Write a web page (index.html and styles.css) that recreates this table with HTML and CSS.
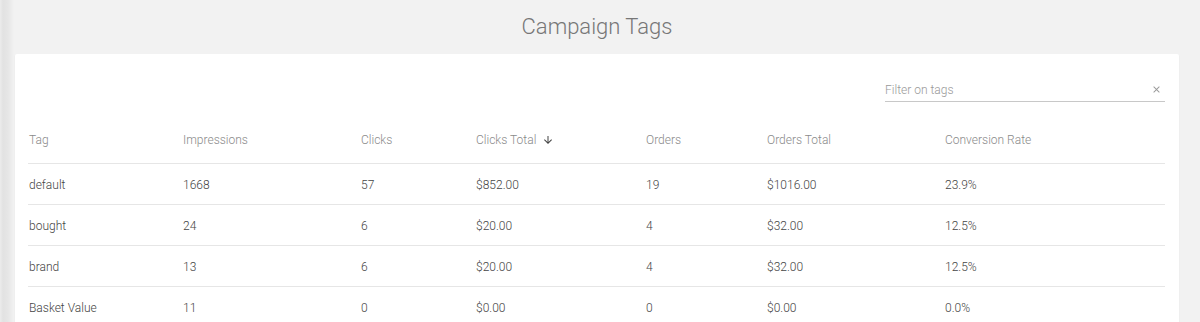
FILE: index.html
```html
<!DOCTYPE html>
<html>
<head>
<meta charset="utf-8">
<link rel="stylesheet" href="styles.css">
</head>
<body>
<div class="page">
  <h1 class="title">Campaign Tags</h1>
  <div class="card">
    <div class="toolbar">
      <div class="filter">
        <span class="filter-placeholder">Filter on tags</span>
        <svg class="filter-clear" viewBox="0 0 24 24" width="11" height="11"><path d="M19 6.41L17.59 5 12 10.59 6.41 5 5 6.41 10.59 12 5 17.59 6.41 19 12 13.41 17.59 19 19 17.59 13.41 12z"/></svg>
      </div>
    </div>
    <table class="tags">
      <colgroup>
        <col class="c1"><col class="c2"><col class="c3"><col class="c4"><col class="c5"><col class="c6"><col class="c7">
      </colgroup>
      <thead>
        <tr>
          <th>Tag</th>
          <th>Impressions</th>
          <th>Clicks</th>
          <th class="sorted">Clicks Total <svg class="sort-icon" viewBox="0 0 24 24" width="12" height="12"><path d="M20 12l-1.41-1.41L13 16.17V4h-2v12.17l-5.58-5.59L4 12l8 8 8-8z"/></svg></th>
          <th>Orders</th>
          <th>Orders Total</th>
          <th>Conversion Rate</th>
        </tr>
      </thead>
      <tbody>
        <tr><td>default</td><td>1668</td><td>57</td><td>$852.00</td><td>19</td><td>$1016.00</td><td>23.9%</td></tr>
        <tr><td>bought</td><td>24</td><td>6</td><td>$20.00</td><td>4</td><td>$32.00</td><td>12.5%</td></tr>
        <tr><td>brand</td><td>13</td><td>6</td><td>$20.00</td><td>4</td><td>$32.00</td><td>12.5%</td></tr>
        <tr><td>Basket Value</td><td>11</td><td>0</td><td>$0.00</td><td>0</td><td>$0.00</td><td>0.0%</td></tr>
      </tbody>
    </table>
  </div>
</div>
</body>
</html>
```
FILE: styles.css
```css
html, body {
  margin: 0;
  padding: 0;
}
body {
  background: linear-gradient(to right, #ececec 0, #e2e2e2 3px, #e6e6e6 8px, #f2f2f2 14px) no-repeat, #f2f2f2;
  background-size: 15px 100%, auto;
  font-family: Roboto, "Liberation Sans", sans-serif;
  height: 322px;
  overflow: hidden;
}
.page {
  padding: 0 21px 0 15px;
}
.title {
  margin: 0;
  height: 54px;
  box-sizing: border-box;
  padding-top: 12px;
  text-align: center;
  font-size: 22px;
  font-weight: 300;
  color: #777;
  line-height: 30px;
}
.card {
  background: #fff;
  border-radius: 2px;
  box-shadow: 0 1px 2px rgba(0, 0, 0, 0.06);
  padding: 24px 14px 0 13px;
}
.toolbar {
  display: flex;
  justify-content: flex-end;
}
.filter {
  width: 280px;
  height: 23px;
  border-bottom: 1px solid #c8c8c8;
  display: flex;
  align-items: center;
  justify-content: space-between;
  font-size: 12px;
  font-weight: 300;
  color: #999;
}
.filter-clear {
  fill: #999;
  margin-right: 3px;
}
.tags {
  width: 100%;
  border-collapse: collapse;
  table-layout: fixed;
  margin-top: 14px;
  font-size: 12px;
  font-weight: 300;
}
.c1 { width: 154px; }
.c2 { width: 178px; }
.c3 { width: 115px; }
.c4 { width: 170px; }
.c5 { width: 121px; }
.c6 { width: 178px; }
.tags th {
  height: 47px;
  text-align: left;
  font-weight: 300;
  color: #8a8a8a;
  padding: 0 0 0 1px;
  border-bottom: 1px solid #e6e6e6;
}
.tags td {
  height: 39px;
  padding: 1px 0 0 1px;
  color: #444;
  border-bottom: 1px solid #e6e6e6;
}
.sort-icon {
  fill: #444;
  vertical-align: -2px;
  margin-left: 3px;
}
```
